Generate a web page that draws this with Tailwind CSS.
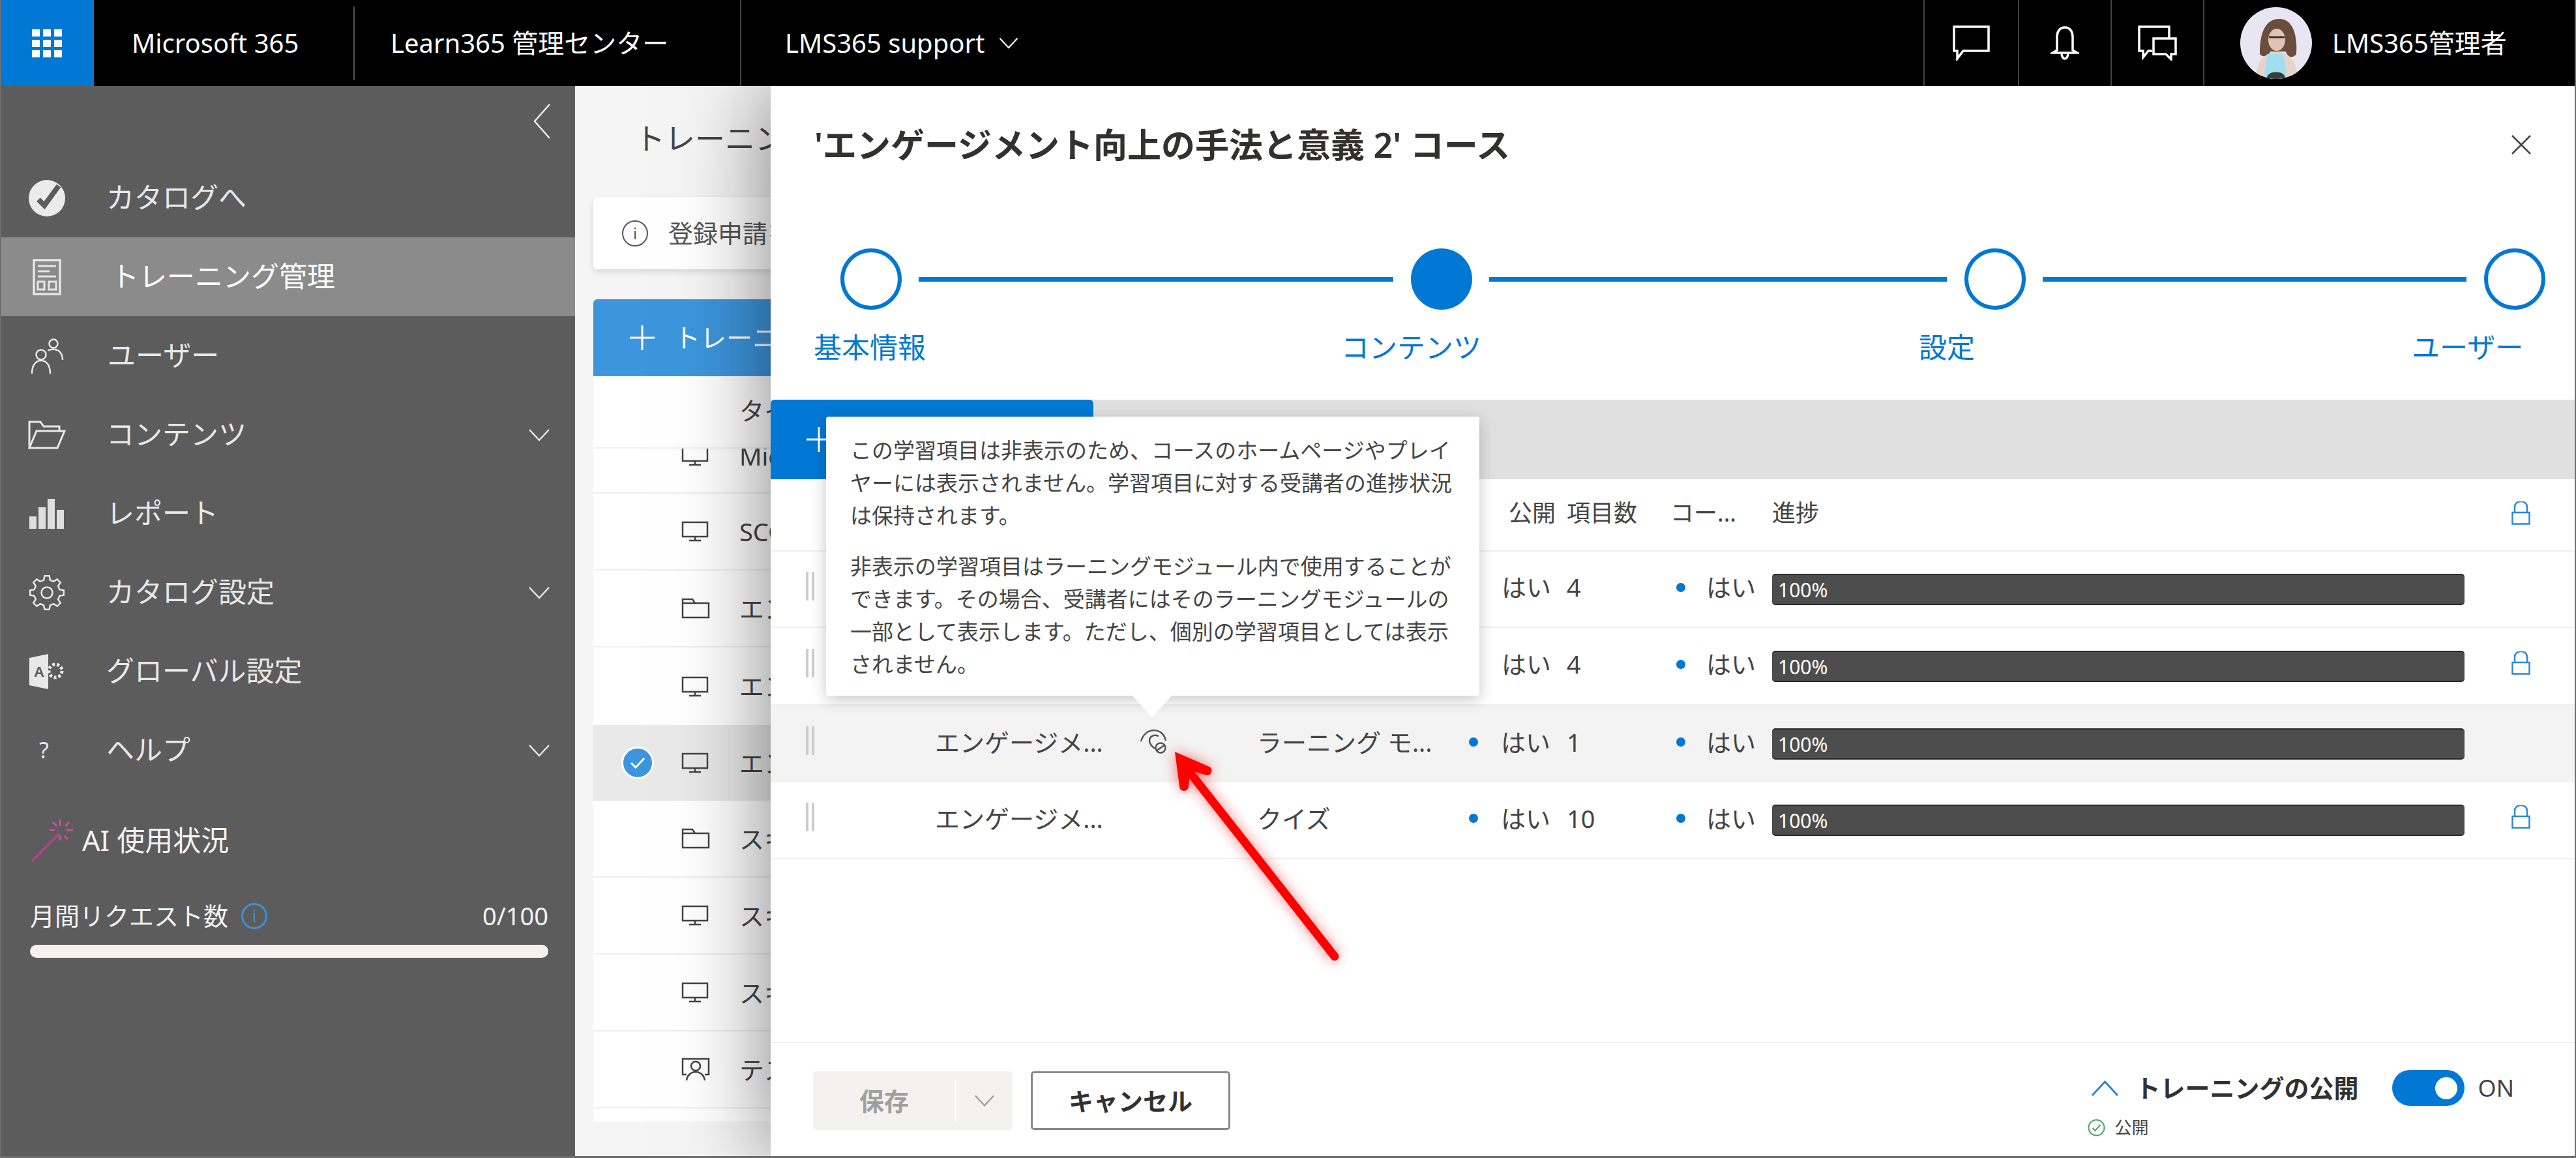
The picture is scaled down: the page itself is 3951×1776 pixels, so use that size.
<!DOCTYPE html>
<html lang="ja">
<head>
    <meta charset="UTF-8">
    <title>Learn365 管理センター</title>
    <script src="https://cdn.jsdelivr.net/npm/@tailwindcss/browser@4"></script>
</head>
<body class="bg-[#6e6e6e]">
    <!-- shared icons -->
    <svg class="hidden">
        <symbol id="monitor" viewBox="0 0 42 32"><path d="M2 2h38v22H2z M21 24v5 M12 30h18" fill="none" stroke="currentColor" stroke-width="2.5"/></symbol>
        <symbol id="folder" viewBox="0 0 44 32"><path d="M2 30V2h15l4 6h21v22z M2 8h19" fill="none" stroke="currentColor" stroke-width="2.5"/></symbol>
        <symbol id="lock" viewBox="0 0 29 36"><path d="M5 17V8a9.500 8 0 0 1 19 0v9 M1.500 17h26v17.500h-26z" fill="none" stroke="currentColor" stroke-width="2.500"/></symbol>
        <symbol id="chevron" viewBox="0 0 34 20"><path d="M2 2l15 16L32 2" fill="none" stroke="currentColor" stroke-width="2.500"/></symbol>
    </svg>

    <div class="w-[3951px] h-[1776px] overflow-hidden flex flex-col border-x-2 border-b-[3px] border-[#6e6e6e] font-['Noto_Sans','Noto_Sans_CJK_JP',sans-serif]">

        <!-- top bar -->
        <header class="relative z-20 h-[132px] shrink-0 bg-black text-white flex items-center text-[40px] -mx-[2px]">
            <div class="w-[144px] h-full bg-[#0078d4] flex items-center justify-center">
                <div class="grid grid-cols-3 gap-[5px]">
                    <span class="w-[12px] h-[11px] bg-white"></span><span class="w-[12px] h-[11px] bg-white"></span><span class="w-[12px] h-[11px] bg-white"></span>
                    <span class="w-[12px] h-[11px] bg-white"></span><span class="w-[12px] h-[11px] bg-white"></span><span class="w-[12px] h-[11px] bg-white"></span>
                    <span class="w-[12px] h-[11px] bg-white"></span><span class="w-[12px] h-[11px] bg-white"></span><span class="w-[12px] h-[11px] bg-white"></span>
                </div>
            </div>
            <div class="w-[398px] pl-[58px]">Microsoft 365</div>
            <div class="w-[2px] h-[113px] bg-[#555]"></div>
            <div class="w-[591px] pl-[55px] whitespace-nowrap">Learn365 管理センター</div>
            <div class="w-[2px] h-full bg-[#444]"></div>
            <div class="pl-[67px] flex items-center whitespace-nowrap">
                LMS365 support
                <svg class="w-[32px] h-[18px] ml-[21px] text-white"><use href="#chevron"/></svg>
            </div>
            <div class="ml-auto flex items-center h-full">
                <div class="w-[145px] h-full border-l-2 border-[#444] flex items-center justify-center">
                    <svg width="58" height="54" viewBox="0 0 58 54"><path d="M2 2h53v37H16L7 51V39H2z" fill="none" stroke="#fff" stroke-width="3.500"/></svg>
                </div>
                <div class="w-[142px] h-full border-l-2 border-[#444] flex items-center justify-center">
                    <svg width="44" height="52" viewBox="0 0 44 52"><path d="M22 2c-8 0-12 7-12 14v21l-7 4h38l-7-4V16c0-7-4-14-12-14z M17 41c0 5 2 9 5 9s5-4 5-9" fill="none" stroke="#fff" stroke-width="3.500"/></svg>
                </div>
                <div class="w-[142px] h-full border-l-2 border-[#444] flex items-center justify-center">
                    <svg width="60" height="54" viewBox="0 0 60 54"><path d="M48 20V2H2v37h6v10l8-10h6 M24 20h34v24h-7v8l-8-8H24z" fill="none" stroke="#fff" stroke-width="3.500"/></svg>
                </div>
                <div class="w-[572px] h-full border-l-2 border-[#444] pl-[55px] flex items-center">
                    <svg width="110" height="110" viewBox="0 0 110 110" class="rounded-full">
                        <rect width="110" height="110" fill="#e8e6f2"/>
                        <path d="M30 72C30 40 38 18 60 18s28 28 26 54c-6 8-14 4-16-4H46c-2 8-10 10-16 4z" fill="#6b4c3d"/>
                        <ellipse cx="56" cy="50" rx="13" ry="17" fill="#e2c3b2"/>
                        <path d="M44 46h24" stroke="#333" stroke-width="3"/>
                        <path d="M24 110c0-26 12-40 32-42 20 2 32 18 32 42z" fill="#e7d4c8"/>
                        <path d="M42 72h24l6 38H36z" fill="#9fe0f0"/>
                        <path d="M40 110c2-8 8-12 20-10 8 2 8 6 10 10z" fill="#3b3b3b"/>
                    </svg>
                    <span class="ml-[31px] whitespace-nowrap">LMS365管理者</span>
                </div>
            </div>
        </header>

        <div class="flex-1 flex min-h-0">

            <!-- sidebar -->
            <aside class="w-[880px] shrink-0 bg-[#5c5c5c] text-[#e8e8e8] text-[43px] flex flex-col">
                <div class="h-[111px] flex justify-end items-start pt-[26px] pr-[36px]">
                    <svg width="30" height="56" viewBox="0 0 30 56"><path d="M27 2L4 28l23 26" fill="none" stroke="#eee" stroke-width="2.500"/></svg>
                </div>

                <nav>
                    <a class="h-[121px] flex items-center pl-[41px]">
                        <svg width="58" height="58" viewBox="0 0 58 58" class="mr-[62px]"><circle cx="29" cy="29" r="28" fill="#ebebeb"/><path d="M16 31l9 9 22-30" fill="none" stroke="#5c5c5c" stroke-width="8"/></svg>
                        カタログへ
                    </a>
                    <a class="h-[121px] flex items-center pl-[48px] bg-[#8b8b8b] text-white">
                        <svg width="44" height="56" viewBox="0 0 44 56" class="mr-[76px]"><path d="M2 2h40v52H2z" fill="none" stroke="#e6e6e6" stroke-width="3.500"/><path d="M8 11h28M8 19h18M8 27h28" stroke="#e6e6e6" stroke-width="3"/><path d="M8 35h10v12H8z M25 35h11v12H25z" fill="none" stroke="#e6e6e6" stroke-width="3"/></svg>
                        トレーニング管理
                    </a>
                    <a class="h-[121px] flex items-center pl-[44px]">
                        <svg width="52" height="56" viewBox="0 0 52 56" class="mr-[67px]"><circle cx="36" cy="9" r="6.500" fill="none" stroke="#e8e8e8" stroke-width="2.500"/><path d="M28 20c2-3 12-3 16 0 4 3 6 9 6 14" fill="none" stroke="#e8e8e8" stroke-width="2.500"/><circle cx="17" cy="26" r="7.500" fill="none" stroke="#e8e8e8" stroke-width="2.500"/><path d="M3 55c0-12 5-20 14-20s14 8 14 20" fill="none" stroke="#e8e8e8" stroke-width="2.500"/></svg>
                        ユーザー
                    </a>
                    <a class="h-[121px] flex items-center pl-[41px] pr-[38px]">
                        <svg width="58" height="44" viewBox="0 0 58 44" class="mr-[62px]"><path d="M2 42V2h17l5 7h24v7 M2 42h43l11-26H13z" fill="none" stroke="#e8e8e8" stroke-width="3"/></svg>
                        コンテンツ
                        <svg class="w-[34px] h-[20px] ml-auto"><use href="#chevron"/></svg>
                    </a>
                    <a class="h-[121px] flex items-center pl-[43px]">
                        <div class="flex items-end gap-[3px] h-[46px] mr-[65px]">
                            <span class="w-[11px] h-[19px] bg-[#dedede]"></span><span class="w-[11px] h-[33px] bg-[#dedede]"></span><span class="w-[11px] h-[46px] bg-[#dedede]"></span><span class="w-[11px] h-[29px] bg-[#dedede]"></span>
                        </div>
                        レポート
                    </a>
                    <a class="h-[121px] flex items-center pl-[41px] pr-[38px]">
                        <svg width="58" height="58" viewBox="-29 -29 58 58" class="mr-[62px]"><polygon points="-4.84,-19.4 -3.62,-25.75 3.62,-25.75 4.84,-19.4 10.3,-17.14 15.65,-20.76 20.76,-15.65 17.14,-10.3 19.4,-4.84 25.75,-3.62 25.75,3.62 19.4,4.84 17.14,10.3 20.76,15.65 15.65,20.76 10.3,17.14 4.84,19.4 3.62,25.75 -3.62,25.75 -4.84,19.4 -10.3,17.14 -15.65,20.76 -20.76,15.65 -17.14,10.3 -19.4,4.84 -25.75,3.62 -25.75,-3.62 -19.4,-4.84 -17.14,-10.3 -20.76,-15.65 -15.65,-20.76 -10.3,-17.14" fill="none" stroke="#e8e8e8" stroke-width="2.500"/><circle r="8.500" fill="none" stroke="#e8e8e8" stroke-width="2.500"/></svg>
                        カタログ設定
                        <svg class="w-[34px] h-[20px] ml-auto"><use href="#chevron"/></svg>
                    </a>
                    <a class="h-[121px] flex items-center pl-[41px]">
                        <svg width="58" height="56" viewBox="0 0 58 56" class="mr-[62px]"><circle cx="42" cy="27" r="10" fill="none" stroke="#e8e8e8" stroke-width="5" stroke-dasharray="4 3"/><path d="M2 7l29-6v54L2 49z" fill="#e8e8e8"/><text x="9" y="36" font-size="22" font-weight="700" fill="#5c5c5c" font-family="Liberation Sans">A</text></svg>
                        グローバル設定
                    </a>
                    <a class="h-[121px] flex items-center pl-[58px] pr-[38px]">
                        <span class="w-[24px] mr-[79px] text-[34px]">?</span>
                        ヘルプ
                        <svg class="w-[34px] h-[20px] ml-auto"><use href="#chevron"/></svg>
                    </a>
                </nav>

                <div class="mt-[36px] pl-[44px] pr-[41px]">
                    <div class="flex items-center h-[84px] text-[#f3f3f3]">
                        <svg width="72" height="72" viewBox="0 0 72 72" class="mr-[8px]">
                            <path d="M3 68L44 26" stroke="#c2378f" stroke-width="3.500"/>
                            <path d="M46 4v10M46 28v8M30 20h8M56 20h10M35 8l6 6M60 8l-6 6M58 34l-5-5" stroke="#d84aa5" stroke-width="2.500"/>
                        </svg>
                        AI 使用状況
                    </div>
                    <div class="flex items-center justify-between mt-[45px] text-[38px] text-[#f3f3f3]">
                        <div class="flex items-center">
                            月間リクエスト数
                            <span class="ml-[20px] w-[40px] h-[40px] rounded-full border-[3px] border-[#3f8fd8] text-[#3f8fd8] text-[26px] flex items-center justify-center">i</span>
                        </div>
                        <span>0/100</span>
                    </div>
                    <div class="h-[20px] mt-[16px] rounded-full bg-[#f3f2f1]"></div>
                </div>
            </aside>

            <!-- page behind the drawer -->
            <main class="flex-1 relative overflow-hidden bg-[#f5f5f5] text-[#444]">
                <div class="w-[1500px] pl-[28px]">
                    <h1 class="pt-[48px] pb-[60px] pl-[64px] text-[46px] leading-[62px] whitespace-nowrap">トレーニング管理</h1>

                    <div class="h-[111px] rounded-[6px] bg-white shadow-[0_4px_10px_rgba(0,0,0,0.12)] flex items-center pl-[44px] text-[38px] text-[#555] whitespace-nowrap">
                        <span class="w-[40px] h-[40px] rounded-full border-2 border-[#555] text-[24px] flex items-center justify-center mr-[31px]">i</span>
                        登録申請を確認してください
                    </div>

                    <div class="mt-[46px] h-[118px] rounded-t-[6px] bg-[#3d96dd] text-white flex items-center pl-[55px] text-[40px] whitespace-nowrap">
                        <svg width="40" height="40" viewBox="0 0 40 40" class="mr-[29px]"><path d="M20 1v38M1 20h38" stroke="#fff" stroke-width="3"/></svg>
                        トレーニングの作成
                    </div>

                    <div class="h-[1143px] bg-white text-[38px] text-[#444] overflow-hidden">
                        <div class="h-[111px] pl-[224px] pt-[24px] bg-white relative z-10 border-b-2 border-[#f0f0f0]">タイトル</div>
                        <div class="h-[69px] overflow-hidden border-b-2 border-[#efefef]">
                            <div class="-mt-[48px] h-[118px] flex items-center pl-[135px]">
                                <svg class="w-[42px] h-[32px] mr-[47px]"><use href="#monitor"/></svg>Microsoft
                            </div>
                        </div>
                        <div class="h-[118px] flex items-center pl-[135px] border-b-2 border-[#efefef]">
                            <svg class="w-[42px] h-[32px] mr-[47px]"><use href="#monitor"/></svg>SCORM
                        </div>
                        <div class="h-[118px] flex items-center pl-[135px] border-b-2 border-[#efefef]">
                            <svg class="w-[44px] h-[32px] mr-[45px]"><use href="#folder"/></svg>エンゲージ
                        </div>
                        <div class="h-[119px] flex items-center pl-[135px]">
                            <svg class="w-[42px] h-[32px] mr-[47px]"><use href="#monitor"/></svg>エンゲージ
                        </div>
                        <div class="h-[116px] flex items-center bg-[#e9e9e9]">
                            <div class="w-[135px] flex justify-center">
                                <span class="w-[50px] h-[50px] rounded-full bg-[#3d96dd] border-[3px] border-white flex items-center justify-center">
                                    <svg width="24" height="18" viewBox="0 0 24 18"><path d="M2 9l7 7L22 2" fill="none" stroke="#fff" stroke-width="3"/></svg>
                                </span>
                            </div>
                            <svg class="w-[42px] h-[32px] mr-[47px]"><use href="#monitor"/></svg>エンゲージ
                        </div>
                        <div class="h-[118px] flex items-center pl-[135px] border-b-2 border-[#efefef]">
                            <svg class="w-[44px] h-[32px] mr-[45px]"><use href="#folder"/></svg>スキル
                        </div>
                        <div class="h-[118px] flex items-center pl-[135px] border-b-2 border-[#efefef]">
                            <svg class="w-[42px] h-[32px] mr-[47px]"><use href="#monitor"/></svg>スキル
                        </div>
                        <div class="h-[118px] flex items-center pl-[135px] border-b-2 border-[#efefef]">
                            <svg class="w-[42px] h-[32px] mr-[47px]"><use href="#monitor"/></svg>スキル
                        </div>
                        <div class="h-[118px] flex items-center pl-[135px] border-b-2 border-[#efefef]">
                            <svg width="44" height="36" viewBox="0 0 44 36" class="mr-[45px]"><path d="M8 26H2V2h40v24h-6" fill="none" stroke="currentColor" stroke-width="2.500"/><circle cx="22" cy="13" r="7" fill="none" stroke="currentColor" stroke-width="2.500"/><path d="M8 35c1-8 7-13 14-13s13 5 14 13" fill="none" stroke="currentColor" stroke-width="2.500"/></svg>
                            テスト
                        </div>
                    </div>
                </div>

                <!-- drawer -->
                <section class="absolute z-10 top-0 bottom-0 right-0 w-[2767px] bg-white text-[#323130] flex flex-col shadow-[0_0_130px_rgba(0,0,0,0.5)]">
                    <div class="h-[180px] shrink-0 flex items-center justify-between pl-[67px] pr-[66px]">
                        <h2 class="text-[52px] font-semibold whitespace-nowrap">'エンゲージメント向上の手法と意義 2' コース</h2>
                        <svg width="32" height="32" viewBox="0 0 32 32"><path d="M2 2l28 28M30 2L2 30" stroke="#444" stroke-width="2.500"/></svg>
                    </div>

                    <!-- stepper -->
                    <div class="h-[301px] shrink-0 pt-[69px] text-[#0078d4]">
                        <div class="flex items-center pl-[107px]">
                            <span class="w-[94px] h-[94px] rounded-full border-[6px] border-[#0078d4]"></span>
                            <span class="w-[728px] h-[7px] ml-[26px] bg-[#0078d4]"></span>
                            <span class="w-[94px] h-[94px] ml-[27px] rounded-full bg-[#0078d4]"></span>
                            <span class="w-[702px] h-[7px] ml-[26px] bg-[#0078d4]"></span>
                            <span class="w-[94px] h-[94px] ml-[27px] rounded-full border-[6px] border-[#0078d4]"></span>
                            <span class="w-[650px] h-[7px] ml-[26px] bg-[#0078d4]"></span>
                            <span class="w-[94px] h-[94px] ml-[27px] rounded-full border-[6px] border-[#0078d4]"></span>
                        </div>
                        <div class="flex mt-[28px] text-[43px] leading-[60px] pl-[66px] whitespace-nowrap">
                            <span>基本情報</span>
                            <span class="ml-[637px]">コンテンツ</span>
                            <span class="ml-[671px]">設定</span>
                            <span class="ml-[670px]">ユーザー</span>
                        </div>
                    </div>

                    <!-- action bar -->
                    <div class="h-[122px] shrink-0 bg-[#e0e0e0] flex">
                        <div class="w-[495px] rounded-t-[6px] bg-[#0078d4] flex items-center pl-[55px]">
                            <svg width="38" height="38" viewBox="0 0 38 38"><path d="M19 0v38M0 19h38" stroke="#fff" stroke-width="3"/></svg>
                        </div>
                    </div>

                    <!-- table -->
                    <div class="h-[111px] shrink-0 flex items-center text-[36px] text-[#444] border-b-2 border-[#f0f0f0] pb-[6px]">
                        <span class="ml-[1132px] w-[89px]">公開</span>
                        <span class="w-[159px]">項目数</span>
                        <span class="w-[156px]">コー...</span>
                        <span class="w-[1134px]">進捗</span>
                        <svg class="w-[29px] h-[36px] text-[#2b88d8]"><use href="#lock"/></svg>
                    </div>

                    <div class="h-[117px] shrink-0 flex items-center text-[38px] text-[#444] border-b-2 border-[#f0f0f0]">
                        <div class="w-[252px] pl-[54px] flex gap-[5px] mb-[10px]"><span class="w-[4px] h-[44px] bg-[#ccc]"></span><span class="w-[4px] h-[44px] bg-[#ccc]"></span></div>
                        <span class="w-[674px] mb-[6px]">エンゲージメ...</span>
                        <span class="w-[145px]"></span>
                        <span class="w-[50px] mb-[6px]"></span>
                        <span class="w-[100px] mb-[6px]">はい</span>
                        <span class="w-[168px] mb-[6px]">4</span>
                        <span class="w-[14px] h-[14px] rounded-full bg-[#0078d4] mb-[6px]"></span>
                        <span class="ml-[32px] w-[101px] mb-[6px]">はい</span>
                        <div class="w-[1062px] h-[48px] rounded-[5px] bg-[#4d4d4d] border-y-2 border-[#2a2a2a] text-white text-[30px] leading-[46px] pl-[9px]">100%</div>
                    </div>

                    <div class="h-[119px] shrink-0 flex items-center text-[38px] text-[#444] border-b-2 border-[#f0f0f0]">
                        <div class="w-[252px] pl-[54px] flex gap-[5px] mb-[10px]"><span class="w-[4px] h-[44px] bg-[#ccc]"></span><span class="w-[4px] h-[44px] bg-[#ccc]"></span></div>
                        <span class="w-[674px] mb-[6px]">エンゲージメ...</span>
                        <span class="w-[145px]"></span>
                        <span class="w-[50px] mb-[6px]"></span>
                        <span class="w-[100px] mb-[6px]">はい</span>
                        <span class="w-[168px] mb-[6px]">4</span>
                        <span class="w-[14px] h-[14px] rounded-full bg-[#0078d4] mb-[6px]"></span>
                        <span class="ml-[32px] w-[101px] mb-[6px]">はい</span>
                        <div class="w-[1062px] h-[48px] rounded-[5px] bg-[#4d4d4d] border-y-2 border-[#2a2a2a] text-white text-[30px] leading-[46px] pl-[9px]">100%</div>
                        <svg class="w-[29px] h-[36px] ml-[72px] mb-[10px] text-[#2b88d8]"><use href="#lock"/></svg>
                    </div>

                    <div class="h-[118px] shrink-0 flex items-center text-[38px] text-[#444] bg-[#f3f3f3]">
                        <div class="w-[252px] pl-[54px] flex gap-[5px] mb-[10px]"><span class="w-[4px] h-[44px] bg-[#ccc]"></span><span class="w-[4px] h-[44px] bg-[#ccc]"></span></div>
                        <span class="w-[311px] mb-[6px] whitespace-nowrap">エンゲージメ...</span>
                        <svg width="50" height="45" viewBox="0 0 50 45" class="w-[50px] mr-[133px] mb-[6px]"><path d="M5 21C8 10 16 4 25 4s16 6 18 16 M32 13c-7-3-14 0-14 7 0 5 4 9 8 12" fill="none" stroke="#555" stroke-width="2.500"/><circle cx="35" cy="31" r="7.500" fill="none" stroke="#555" stroke-width="2.500"/><path d="M29 35l12-8" stroke="#555" stroke-width="2.500"/></svg>
                        <span class="w-[325px] mb-[6px] whitespace-nowrap">ラーニング モ...</span>
                        <span class="w-[14px] h-[14px] rounded-full bg-[#0078d4] mb-[6px]"></span>
                        <span class="ml-[35px] w-[101px] mb-[6px]">はい</span>
                        <span class="w-[168px] mb-[6px]">1</span>
                        <span class="w-[14px] h-[14px] rounded-full bg-[#0078d4] mb-[6px]"></span>
                        <span class="ml-[32px] w-[101px] mb-[6px]">はい</span>
                        <div class="w-[1062px] h-[48px] rounded-[5px] bg-[#4d4d4d] border-y-2 border-[#2a2a2a] text-white text-[30px] leading-[46px] pl-[9px]">100%</div>
                    </div>

                    <div class="h-[118px] shrink-0 flex items-center text-[38px] text-[#444] border-b-2 border-[#f0f0f0]">
                        <div class="w-[252px] pl-[54px] flex gap-[5px] mb-[10px]"><span class="w-[4px] h-[44px] bg-[#ccc]"></span><span class="w-[4px] h-[44px] bg-[#ccc]"></span></div>
                        <span class="w-[494px] mb-[6px] whitespace-nowrap">エンゲージメ...</span>
                        <span class="w-[325px] mb-[6px]">クイズ</span>
                        <span class="w-[14px] h-[14px] rounded-full bg-[#0078d4] mb-[6px]"></span>
                        <span class="ml-[35px] w-[101px] mb-[6px]">はい</span>
                        <span class="w-[168px] mb-[6px]">10</span>
                        <span class="w-[14px] h-[14px] rounded-full bg-[#0078d4] mb-[6px]"></span>
                        <span class="ml-[32px] w-[101px] mb-[6px]">はい</span>
                        <div class="w-[1062px] h-[48px] rounded-[5px] bg-[#4d4d4d] border-y-2 border-[#2a2a2a] text-white text-[30px] leading-[46px] pl-[9px]">100%</div>
                        <svg class="w-[29px] h-[36px] ml-[72px] mb-[10px] text-[#2b88d8]"><use href="#lock"/></svg>
                    </div>

                    <div class="flex-1"></div>

                    <!-- footer -->
                    <div class="h-[175px] shrink-0 border-t-2 border-[#eee] flex justify-between pl-[65px] pr-[93px]">
                        <div class="flex gap-[28px] pt-[43px] h-[133px]">
                            <div class="w-[306px] rounded-[5px] bg-[#f3f2f1] flex items-center text-[#a19f9d] text-[38px] font-bold">
                                <span class="w-[218px] text-center">保存</span>
                                <span class="w-[2px] h-[64px] bg-white"></span>
                                <svg class="w-[32px] h-[20px] ml-[27px]"><use href="#chevron"/></svg>
                            </div>
                            <div class="w-[306px] rounded-[5px] bg-white border-[3px] border-[#8a8886] flex items-center justify-center text-[38px] font-bold">キャンセル</div>
                        </div>
                        <div class="pt-[41px]">
                            <div class="flex items-center h-[55px]">
                                <svg width="43" height="24" viewBox="0 0 43 24" class="ml-[5px] mr-[26px]"><path d="M2 23L21.500 2 41 23" fill="none" stroke="#2b88d8" stroke-width="3"/></svg>
                                <span class="w-[393px] text-[38px] font-bold whitespace-nowrap">トレーニングの公開</span>
                                <span class="w-[111px] h-[55px] rounded-full bg-[#0078d4] flex items-center justify-end pr-[11px]"><span class="w-[34px] h-[34px] rounded-full bg-white"></span></span>
                                <span class="ml-[21px] text-[36px] text-[#444]">ON</span>
                            </div>
                            <div class="flex items-center mt-[14px] text-[26px] text-[#444]">
                                <svg width="27" height="27" viewBox="0 0 27 27" class="mr-[15px]"><circle cx="13.500" cy="13.500" r="12" fill="none" stroke="#4aa564" stroke-width="2"/><path d="M7.500 14l4 4 8-9" fill="none" stroke="#4aa564" stroke-width="2"/></svg>
                                公開
                            </div>
                        </div>
                    </div>
                </section>
            </main>
        </div>
    </div>

    <!-- tooltip over the table -->
    <div class="absolute z-30 left-[1267px] top-[639px] w-[1002px] h-[428px] rounded-[4px] bg-white shadow-[0_6px_24px_rgba(0,0,0,0.22)] pl-[37px] pt-[27px] text-[33px] leading-[50px] text-[#444] whitespace-nowrap font-['Noto_Sans','Noto_Sans_CJK_JP',sans-serif]">
        <p>この学習項目は非表示のため、コースのホームページやプレイ<br>ヤーには表示されません。学習項目に対する受講者の進捗状況<br>は保持されます。</p>
        <p class="mt-[28px]">非表示の学習項目はラーニングモジュール内で使用することが<br>できます。その場合、受講者にはそのラーニングモジュールの<br>一部として表示します。ただし、個別の学習項目としては表示<br>されません。</p>
        <svg width="62" height="34" viewBox="0 0 62 34" class="absolute left-[469px] -bottom-[33px]"><path d="M0 0h62L31 34z" fill="#fff"/></svg>
    </div>

    <!-- annotation arrow -->
    <svg class="absolute z-40 left-[1780px] top-[1130px] drop-shadow-[0_0_10px_rgba(255,0,0,0.55)]" width="290" height="360" viewBox="1780 1130 290 360">
        <path d="M2047 1467L1815 1172" stroke="#f00" stroke-width="13" stroke-linecap="round"/>
        <path d="M1802 1153L1855 1176a7 7 0 0 1-4 13L1826 1182L1823 1206a7 7 0 0 1-14 0z" fill="#f00"/>
    </svg>
</body>
</html>
